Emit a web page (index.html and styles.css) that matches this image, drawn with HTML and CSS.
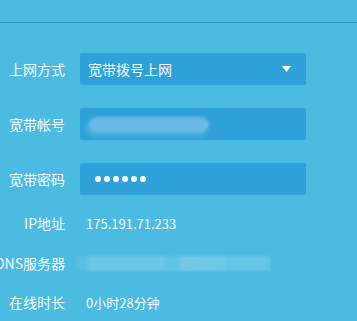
FILE: index.html
```html
<!DOCTYPE html>
<html lang="zh">
<head>
<meta charset="utf-8">
<link rel="stylesheet" href="styles.css">
</head>
<body>
<div class="topbar"></div>
<div class="form">
  <div class="row row-input">
    <div class="label">上网方式</div>
    <div class="box select">
      <span class="val">宽带拨号上网</span>
      <svg class="arrow" width="9" height="6" viewBox="0 0 9 6"><path d="M0 0H9L4.5 6Z" fill="#fff"/></svg>
    </div>
  </div>
  <div class="row row-input gap23">
    <div class="label">宽带帐号</div>
    <div class="box"><div class="blur-acct"></div></div>
  </div>
  <div class="row row-input gap23">
    <div class="label">宽带密码</div>
    <div class="box"><div class="dots"><i></i><i></i><i></i><i></i><i></i><i></i></div></div>
  </div>
  <div class="row row-text gap-ip">
    <div class="label">IP地址</div>
    <div class="text">175.191.71.233</div>
  </div>
  <div class="row row-text gap-dns">
    <div class="label">DNS服务器</div>
    <div class="blur-dns"></div>
  </div>
  <div class="row row-text gap-on">
    <div class="label">在线时长</div>
    <div class="text">0小时28分钟</div>
  </div>
</div>
</body>
</html>
```
FILE: styles.css
```css
html, body {
  margin: 0;
  padding: 0;
}
body {
  background: #4bbbe1;
  font-family: "Noto Sans CJK SC", "Noto Sans", sans-serif;
  font-size: 14px;
  color: #fff;
  width: 357px;
  height: 321px;
  overflow: hidden;
}
.topbar {
  height: 22px;
  border-bottom: 1px solid #2898c8;
}
.form {
  display: flex;
  flex-direction: column;
  padding-top: 30px;
}
.row {
  display: flex;
  align-items: center;
}
.label {
  width: 65px;
  flex: none;
  text-align: right;
  white-space: nowrap;
  direction: rtl;
  overflow: visible;
  margin-right: 15px;
  color: #f4faff;
}
.label {
  direction: ltr;
  display: flex;
  justify-content: flex-end;
}
.row-input { height: 32px; }
.row-text { height: 20px; }
.gap23 { margin-top: 23px; }
.gap-ip { margin-top: 18px; }
.gap-dns { margin-top: 20px; }
.gap-on { margin-top: 19px; }
.box {
  width: 226px;
  height: 32px;
  background: #2ea1d8;
  border-radius: 2px;
  display: flex;
  align-items: center;
  position: relative;
  box-sizing: border-box;
  padding-left: 8px;
}
.select {
  justify-content: space-between;
  padding-right: 15px;
}
.val { color: #f6fbff; }
.arrow { display: block; }
.blur-acct {
  width: 120px;
  height: 15px;
  margin-left: 1px;
  background: #6bb9e6;
  border-radius: 8px;
  filter: blur(1.5px);
  box-shadow: -2px 4px 4px rgba(110, 190, 232, 0.6);
}
.dots {
  display: flex;
  gap: 3px;
  margin-left: 7px;
}
.dots i {
  width: 6px;
  height: 6px;
  border-radius: 50%;
  background: #fff;
}
.text {
  padding-left: 6px;
  font-size: 13px;
  color: #f4faff;
}
.blur-dns {
  width: 194px;
  height: 15px;
  margin-left: -4px;
  background: linear-gradient(90deg, rgba(255,255,255,0.08) 0, rgba(255,255,255,0.08) 12px, rgba(255,255,255,0.18) 12px, rgba(255,255,255,0.18) 88px, rgba(255,255,255,0.12) 88px, rgba(255,255,255,0.12) 104px, rgba(255,255,255,0.22) 104px, rgba(255,255,255,0.2) 150px, rgba(255,255,255,0.15) 150px, rgba(255,255,255,0.15) 194px);
  filter: blur(1px);
}
```
